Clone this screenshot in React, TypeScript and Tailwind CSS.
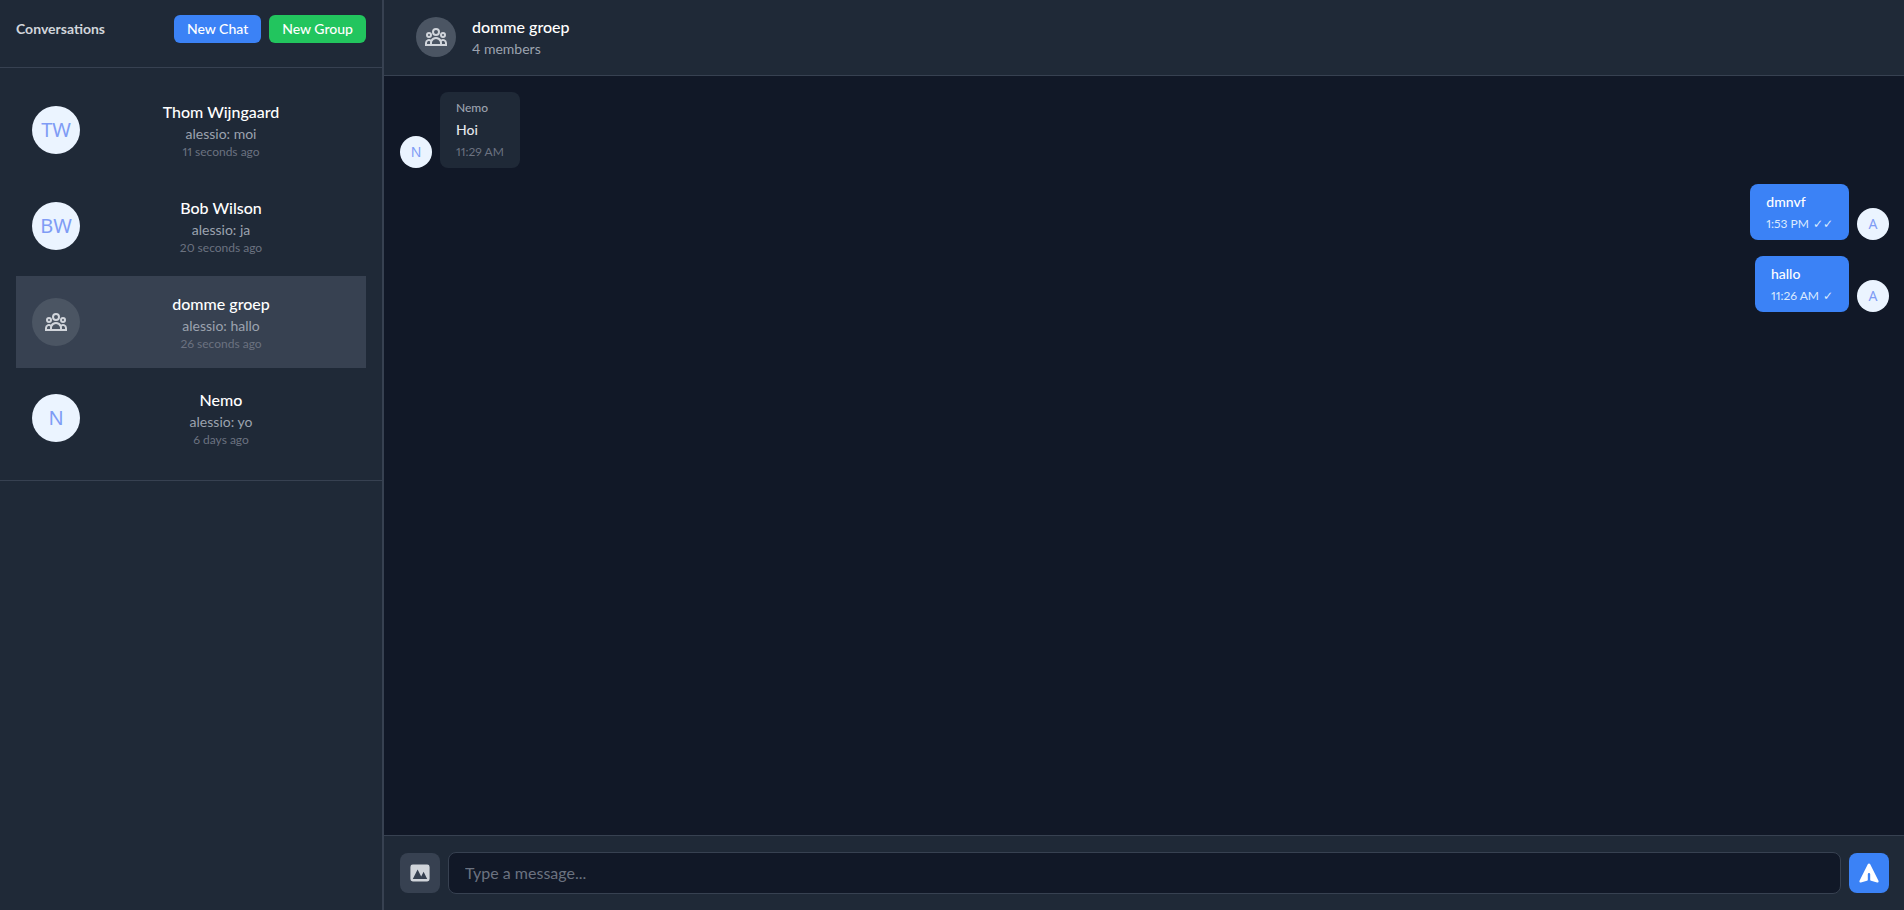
import { useState } from 'react';
import clsx from 'clsx';

interface Conversation {
  id: number;
  name: string;
  initials?: string;
  lastMessage: string;
  time: string;
}

interface Message {
  id: number;
  sender: string;
  initial: string;
  body: string;
  time: string;
  own: boolean;
  read?: boolean;
}

const conversations: Conversation[] = [
  { id: 1, name: 'Thom Wijngaard', initials: 'TW', lastMessage: 'alessio: moi', time: '11 seconds ago' },
  { id: 2, name: 'Bob Wilson', initials: 'BW', lastMessage: 'alessio: ja', time: '20 seconds ago' },
  { id: 3, name: 'domme groep', lastMessage: 'alessio: hallo', time: '26 seconds ago' },
  { id: 4, name: 'Nemo', initials: 'N', lastMessage: 'alessio: yo', time: '6 days ago' },
];

const messages: Message[] = [
  { id: 1, sender: 'Nemo', initial: 'N', body: 'Hoi', time: '11:29 AM', own: false },
  { id: 2, sender: 'alessio', initial: 'A', body: 'dmnvf', time: '1:53 PM', own: true, read: true },
  { id: 3, sender: 'alessio', initial: 'A', body: 'hallo', time: '11:26 AM', own: true, read: false },
];

function GroupIcon() {
  return (
    <svg className="h-6 w-6 text-[#d1d5db]" fill="none" stroke="currentColor" strokeWidth={2} viewBox="0 0 24 24" aria-hidden="true">
      <path d="M17 20h5v-2a3 3 0 00-5.356-1.857M17 20H7m10 0v-2c0-.656-.126-1.283-.356-1.857M7 20H2v-2a3 3 0 015.356-1.857M7 20v-2c0-.656.126-1.283.356-1.857m0 0a5.002 5.002 0 019.288 0M15 7a3 3 0 11-6 0 3 3 0 016 0zm6 3a2 2 0 11-4 0 2 2 0 014 0zM7 10a2 2 0 11-4 0 2 2 0 014 0z" />
    </svg>
  );
}

function PhotoIcon() {
  return (
    <svg className="h-6 w-6" fill="currentColor" viewBox="0 0 20 20" aria-hidden="true">
      <path
        fillRule="evenodd"
        clipRule="evenodd"
        d="M4 3a2 2 0 00-2 2v10a2 2 0 002 2h12a2 2 0 002-2V5a2 2 0 00-2-2H4zm12 12H4l4-8 3 6 2-4 3 6z"
      />
    </svg>
  );
}

function SendIcon() {
  return (
    <svg className="h-6 w-6" fill="currentColor" viewBox="0 0 20 20" aria-hidden="true">
      <path d="M10.894 2.553a1 1 0 00-1.788 0l-7 14a1 1 0 001.169 1.409l5-1.429A1 1 0 009 15.571V11a1 1 0 112 0v4.571a1 1 0 00.725.962l5 1.428a1 1 0 001.17-1.408l-7-14z" />
    </svg>
  );
}

// Initials on a pale circle, or the group icon when there are none
function Avatar({ initials, size }: { initials?: string; size: 'sm' | 'md' | 'lg' }) {
  return (
    <div
      className={clsx(
        'flex shrink-0 items-center justify-center rounded-full font-["Noto_Sans",sans-serif] text-[#7f9cf5]',
        initials ? 'bg-[#ebf4ff]' : 'bg-[#4b5563]',
        size === 'sm' && 'h-8 w-8 text-sm',
        size === 'md' && 'h-10 w-10 text-base',
        size === 'lg' && 'h-12 w-12 text-xl'
      )}
    >
      {initials ?? <GroupIcon />}
    </div>
  );
}

function MessageRow({ message }: { message: Message }) {
  const { own } = message;

  return (
    <div className={clsx('flex items-end gap-2', own && 'flex-row-reverse')}>
      <Avatar initials={message.initial} size="sm" />
      <div className={clsx('rounded-lg px-4 py-2', own ? 'bg-[#3b82f6] text-white' : 'bg-[#1f2937] text-[#e5e7eb]')}>
        {!own && <p className="mb-1 text-xs font-medium text-[#9ca3af]">{message.sender}</p>}
        <p className="text-sm font-medium">{message.body}</p>
        <p className={clsx('mt-1 flex gap-1 text-xs', own ? 'text-[#dbeafe]' : 'text-[#6b7280]')}>
          <span>{message.time}</span>
          {own && <span>{message.read ? '✓✓' : '✓'}</span>}
        </p>
      </div>
    </div>
  );
}

export default function App() {
  const [activeId, setActiveId] = useState(3);
  const [draft, setDraft] = useState('');

  return (
    <div className="flex h-screen overflow-hidden bg-[#111827] font-[Lato,'DejaVu_Sans',sans-serif] proportional-nums">
      {/* Sidebar */}
      <aside className="w-96 shrink-0 border-r-2 border-[#374151] bg-[#1f2937]">
        <div className="flex items-start justify-between border-b border-[#374151] px-4 pt-[15px] pb-6">
          <h2 className="py-1 text-sm font-bold text-[#d1d5db]">Conversations</h2>
          <div className="flex gap-2">
            <button type="button" className="rounded-md bg-[#3b82f6] px-[13px] py-1 text-sm font-medium text-white">
              New Chat
            </button>
            <button type="button" className="rounded-md bg-[#22c55e] px-[13px] py-1 text-sm font-medium text-white">
              New Group
            </button>
          </div>
        </div>

        <div className="space-y-1 border-b border-[#374151] p-4">
          {conversations.map((c) => (
            <button
              key={c.id}
              type="button"
              onClick={() => setActiveId(c.id)}
              className={clsx('flex w-full items-center gap-3 p-4', c.id === activeId && 'bg-[#374151]')}
            >
              <Avatar initials={c.initials} size="lg" />
              <div className="min-w-0 flex-1 text-center">
                <p className="truncate text-base font-medium text-white">{c.name}</p>
                <p className="truncate text-sm text-[#9ca3af]">{c.lastMessage}</p>
                <p className="text-xs text-[#6b7280]">{c.time}</p>
              </div>
            </button>
          ))}
        </div>
      </aside>

      {/* Chat */}
      <main className="flex min-w-0 flex-1 flex-col">
        <header className="flex items-center gap-4 border-b border-[#374151] bg-[#1f2937] px-8 pt-[15px] pb-4">
          <Avatar size="md" />
          <div>
            <h3 className="text-base font-medium text-white">domme groep</h3>
            <p className="text-sm text-[#9ca3af]">4 members</p>
          </div>
        </header>

        <div className="flex-1 space-y-4 overflow-y-auto py-4 pr-[15px] pl-4">
          {messages.map((m) => (
            <MessageRow key={m.id} message={m} />
          ))}
        </div>

        <form
          className="flex items-center gap-2 border-t border-[#374151] bg-[#1f2937] py-4 pr-[15px] pl-4"
          onSubmit={(e) => e.preventDefault()}
        >
          <button type="button" aria-label="Attach image" className="rounded-lg bg-[#374151] p-2 text-[#d1d5db]">
            <PhotoIcon />
          </button>
          <input
            type="text"
            aria-label="Message"
            placeholder="Type a message..."
            value={draft}
            onChange={(e) => setDraft(e.target.value)}
            className="min-w-0 flex-1 rounded-lg border border-[#374151] bg-[#111827] px-4 py-2 text-base text-white placeholder:text-[#6b7280]"
          />
          <button type="submit" aria-label="Send" className="rounded-lg bg-[#3b82f6] p-2 text-white">
            <SendIcon />
          </button>
        </form>
      </main>
    </div>
  );
}
